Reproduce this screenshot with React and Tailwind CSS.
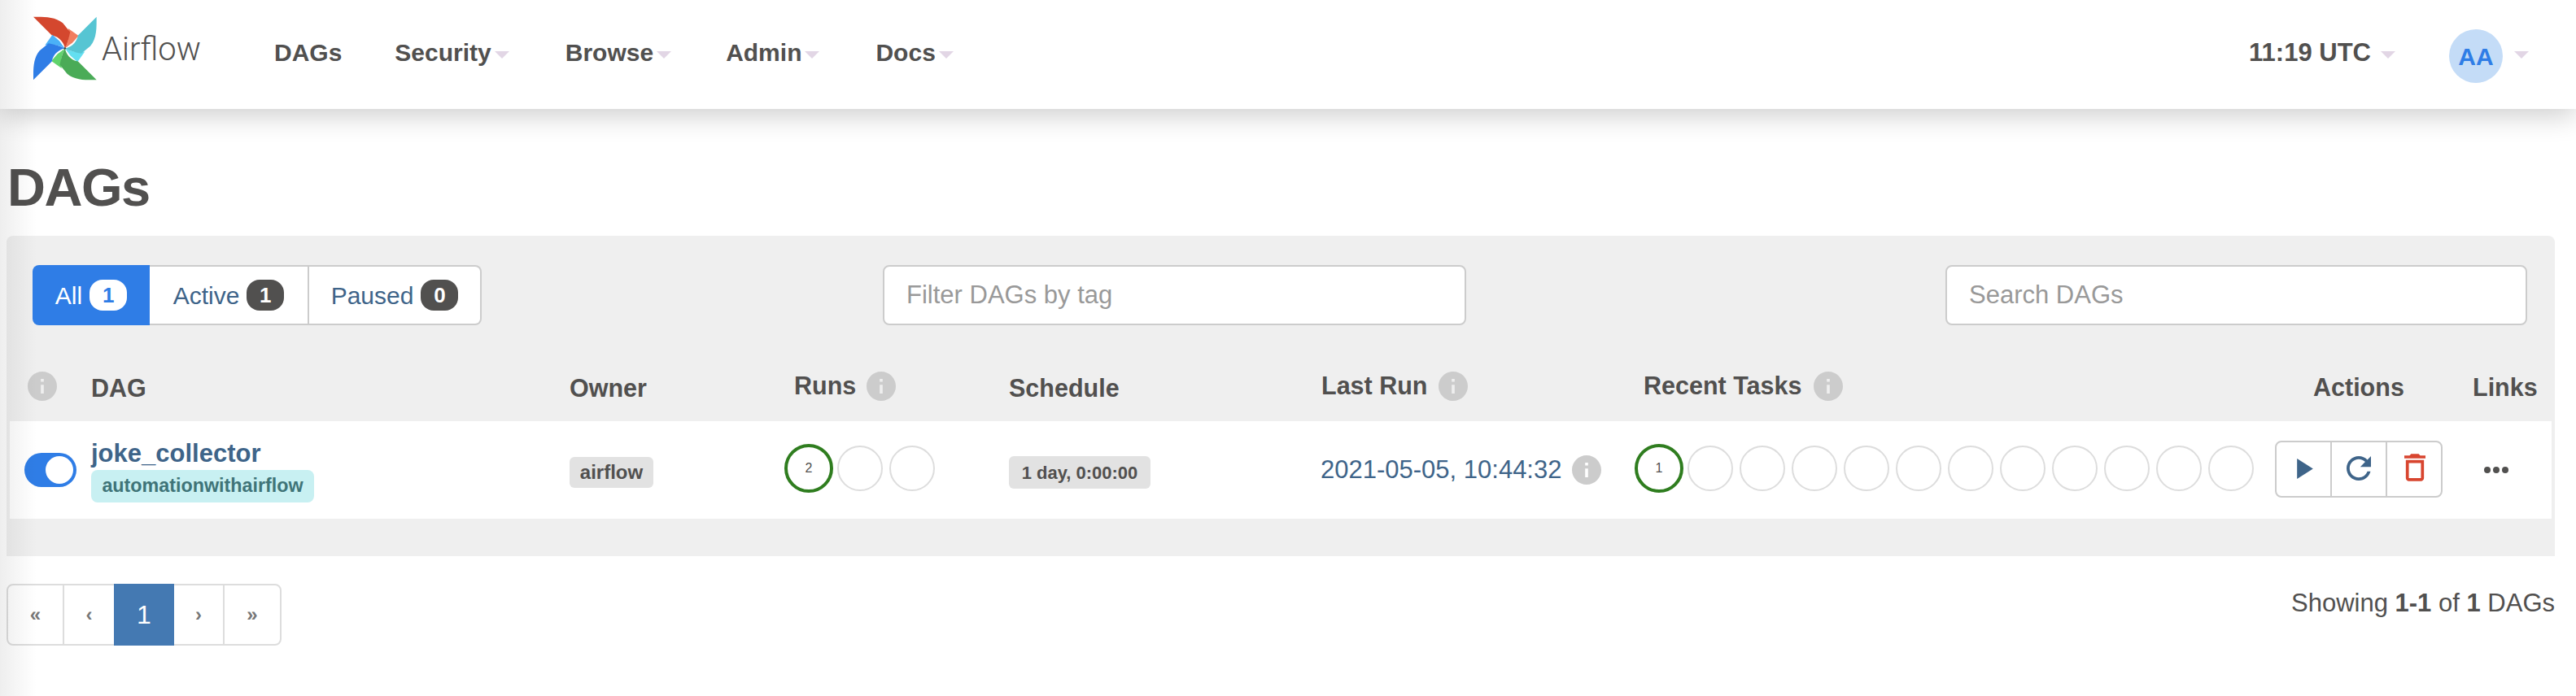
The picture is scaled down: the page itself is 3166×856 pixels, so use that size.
import React from "react";

const COLS = "grid grid-cols-[82px_588px_264px_276px_384px_385px_787px_243px_95px] pl-[18px] items-center";

function Caret({ className = "" }) {
  return <span className={"inline-block w-0 h-0 border-x-[9px] border-t-[9px] border-x-transparent border-t-[#e2d6e5] " + className} />;
}

function NavItem({ label, caret = true, className = "" }) {
  return (
    <span className={"flex items-center font-bold text-[30px] leading-[40px] text-[#51504f] " + className}>
      {label}
      {caret && <Caret className="ml-[4px] mt-[4px]" />}
    </span>
  );
}

function Info({ className = "" }) {
  return (
    <svg viewBox="2 2 20 20" className={"w-[36px] h-[36px] shrink-0 fill-[#cccccc] " + className}>
      <path d="M12 2C6.48 2 2 6.48 2 12s4.48 10 10 10 10-4.48 10-10S17.52 2 12 2zm1 15h-2v-6h2v6zm0-8h-2V7h2v2z" />
    </svg>
  );
}

function Logo() {
  const petals = [
    ["#d4472e", "#f17e60", 0],
    ["#56c5d3", "#64dff0", 90],
    ["#4aab57", "#61d36c", 180],
    ["#2f7de6", "#4bb1f7", 270],
  ];
  return (
    <svg viewBox="62 60 236 236" className="w-[79px] h-[79px] shrink-0">
      {petals.map(([main, light, rot]) => (
        <g key={rot} transform={`rotate(${rot} 178 178)`}>
          <path d="M190 105 L228 132 L205 158 C195 165 185 172 178 178 C188 160 196 135 190 105 Z" fill={light} />
          <path d="M62 62 C100 62 140 60 170 85 L197 118 C192 140 188 160 178 178 C175 160 160 135 130 130 Z" fill={main} />
        </g>
      ))}
      <circle cx="178" cy="178" r="4" fill="#37474f" />
    </svg>
  );
}

function Badge({ children, light }) {
  return (
    <span className={"ml-[9px] w-[46px] h-[38px] rounded-[16px] flex items-center justify-center font-bold text-[26px] " + (light ? "bg-white text-[#2f7de6]" : "bg-[#51504f] text-white")}>
      {children}
    </span>
  );
}

function Circle({ n }) {
  if (n) {
    return (
      <span className="w-[60px] h-[60px] -mr-[3px] rounded-full border-[4px] border-[#2f7d1f] flex items-center justify-center text-[16px] text-[#51504f] bg-white">
        {n}
      </span>
    );
  }
  return <span className="w-[56px] h-[56px] rounded-full border-2 border-[#dddddd]" />;
}

function PageCell({ children, className = "" }) {
  return <span className={"flex items-center justify-center text-[#777777] font-bold text-[24px] " + className}>{children}</span>;
}

export default function App() {
  return (
    <div className="relative min-h-[856px] w-[3166px] overflow-hidden bg-white font-['Liberation_Sans',sans-serif] text-[#51504f]">
      <header className="relative h-[134px] bg-white shadow-[0_8px_32px_rgba(0,0,0,0.2)] flex items-center pl-[41px]">
        <div className="flex items-center w-[296px] -mt-[16px]">
          <Logo />
          <span className="ml-[5px] mt-[4px] font-['Roboto',sans-serif] font-light text-[40px] leading-none text-[#51504f]">Airflow</span>
        </div>
        <nav className="flex items-center -mt-[4px]">
          <NavItem label="DAGs" caret={false} />
          <NavItem label="Security" className="ml-[65px]" />
          <NavItem label="Browse" className="ml-[69px]" />
          <NavItem label="Admin" className="ml-[67px]" />
          <NavItem label="Docs" className="ml-[69px]" />
        </nav>
        <div className="ml-auto flex items-center pr-[58px]">
          <span className="font-bold text-[31px] leading-[40px] -mt-[4px]">11:19 UTC</span>
          <Caret className="ml-[12px]" />
          <span className="ml-[66px] mt-[4px] w-[66px] h-[66px] rounded-full bg-[#c4dcf7] text-[#2f7de6] font-bold text-[30px] flex items-center justify-center">AA</span>
          <Caret className="ml-[14px]" />
        </div>
      </header>

      <main className="px-[8px]">
        <h1 className="mt-[64px] h-[92px] font-bold text-[65px] leading-[66px] tracking-[-1.5px] pl-[1px]">DAGs</h1>

        <section className="w-[3132px] bg-[#efefef] rounded-t-[8px] pt-[36px] pb-[46px] px-[4px]">
          <div className="flex items-center pl-[28px] pr-[30px]">
            <div className="w-[552px] h-[74px] flex text-[30px]">
              <span className="w-[144px] bg-[#2f7de6] text-white rounded-l-[8px] flex items-center justify-center">
                All<Badge light>1</Badge>
              </span>
              <span className="w-[196px] bg-white text-[#3e6489] border-y-2 border-r-2 border-[#cccccc] flex items-center justify-center">
                Active<Badge>1</Badge>
              </span>
              <span className="w-[212px] bg-white text-[#3e6489] border-y-2 border-r-2 border-[#cccccc] rounded-r-[8px] flex items-center justify-center">
                Paused<Badge>0</Badge>
              </span>
            </div>
            <div className="ml-[493px] w-[717px] h-[74px] bg-white border-2 border-[#cccccc] rounded-[8px] flex items-center pl-[27px] text-[31px] text-[#999999]">
              Filter DAGs by tag
            </div>
            <div className="ml-auto w-[715px] h-[74px] bg-white border-2 border-[#cccccc] rounded-[8px] flex items-center pl-[27px] text-[31px] text-[#999999]">
              Search DAGs
            </div>
          </div>

          <div className={COLS + " h-[118px] pt-[38px] font-bold text-[30.5px]"}>
            <Info className="-mt-[6px] ml-[4px]" />
            <span>DAG</span>
            <span>Owner</span>
            <span className="pl-[12px] flex items-center gap-[13px] -mt-[6px]">Runs<Info /></span>
            <span>Schedule</span>
            <span className="flex items-center gap-[14px] -mt-[6px]">Last Run<Info /></span>
            <span className="pl-[11px] flex items-center gap-[15px] -mt-[6px]">Recent Tasks<Info /></span>
            <span className="pl-[47px] -mt-[3px]">Actions</span>
            <span className="-mt-[3px]">Links</span>
          </div>

          <div className={COLS + " h-[120px] bg-white"}>
            <div className="w-[64px] h-[42px] rounded-full bg-[#2f7de6] flex items-center justify-end pr-[4px]">
              <span className="w-[34px] h-[34px] rounded-full bg-white" />
            </div>
            <div className="flex flex-col items-start">
              <span className="font-bold text-[31px] leading-[34px] text-[#3e6489] pt-[2px]">joke_collector</span>
              <span className="mt-[3px] h-[40px] w-[274px] rounded-[8px] bg-[#c8f0f2] text-[#3f7478] font-bold text-[23.3px] flex items-center justify-center">automationwithairflow</span>
            </div>
            <div className="pt-[6px]">
              <span className="inline-flex h-[38px] w-[103px] rounded-[6px] bg-[#e2e2e2] font-bold text-[24px] items-center justify-center">airflow</span>
            </div>
            <div className="flex items-center gap-[8px] -mt-[4px]">
              <Circle n="2" /><Circle /><Circle />
            </div>
            <div className="pt-[6px]">
              <span className="inline-flex h-[40px] w-[174px] rounded-[6px] bg-[#e2e2e2] font-bold text-[22px] items-center justify-center">1 day, 0:00:00</span>
            </div>
            <div className="flex items-center gap-[13px] text-[31px] text-[#3e6489] -ml-[1px]">
              2021-05-05, 10:44:32<Info />
            </div>
            <div className="flex items-center gap-[8px] -mt-[4px]">
              <Circle n="1" />
              <Circle /><Circle /><Circle /><Circle /><Circle /><Circle />
              <Circle /><Circle /><Circle /><Circle /><Circle />
            </div>
            <div className="flex w-[206px] h-[70px] border-2 border-[#cccccc] rounded-[8px] -mt-[2px]">
              <span className="w-[68px] border-r-2 border-[#cccccc] flex items-center justify-center">
                <svg viewBox="8 5 11 14" className="w-[20px] h-[25px] -mt-[2px] ml-[4px] fill-[#3e6489]"><path d="M8 5v14l11-7z" /></svg>
              </span>
              <span className="w-[68px] border-r-2 border-[#cccccc] flex items-center justify-center">
                <svg viewBox="4 4 16 16" className="w-[30px] h-[30px] -mt-[2px] fill-[#3e6489]"><path d="M17.65 6.35C16.2 4.9 14.21 4 12 4c-4.42 0-7.99 3.58-7.99 8s3.57 8 7.99 8c3.73 0 6.84-2.55 7.73-6h-2.08c-.82 2.33-3.04 4-5.65 4-3.31 0-6-2.69-6-6s2.69-6 6-6c1.66 0 3.14.69 4.22 1.78L13 11h7V4l-2.35 2.35z" /></svg>
              </span>
              <span className="flex-1 flex items-center justify-center">
                <svg viewBox="5 3 14 18" className="w-[26px] h-[34px] -mt-[4px] ml-[2px] fill-[#d8452f]"><path d="M6 19c0 1.1.9 2 2 2h8c1.1 0 2-.9 2-2V7H6v12zM8 9h8v10H8V9zm7.5-5l-1-1h-5l-1 1H5v2h14V4h-3.5z" /></svg>
              </span>
            </div>
            <div className="pl-[14px]">
              <svg viewBox="0 0 30 8" className="w-[30px] h-[8px] fill-[#51504f]">
                <circle cx="4" cy="4" r="4" /><circle cx="15" cy="4" r="4" /><circle cx="26" cy="4" r="4" />
              </svg>
            </div>
          </div>
        </section>

        <div className="w-[3132px] flex items-start justify-between mt-[34px]">
          <div className="w-[338px] h-[76px] flex border-2 border-[#dddddd] rounded-[8px] bg-white">
            <PageCell className="w-[69px] border-r-2 border-[#dddddd]">«</PageCell>
            <PageCell className="w-[61px]">‹</PageCell>
            <span className="w-[74px] -my-[2px] bg-[#4479b2] text-white text-[32px] flex items-center justify-center">1</span>
            <PageCell className="w-[62px] border-r-2 border-[#dddddd]">›</PageCell>
            <PageCell className="flex-1">»</PageCell>
          </div>
          <p className="text-[31px] leading-[40px] pt-[4px]">
            Showing <b>1-1</b> of <b>1</b> DAGs
          </p>
        </div>
      </main>

      <div className="absolute inset-y-0 left-0 w-[45px] bg-gradient-to-r from-[rgba(0,0,0,0.065)] to-transparent pointer-events-none" />
    </div>
  );
}
